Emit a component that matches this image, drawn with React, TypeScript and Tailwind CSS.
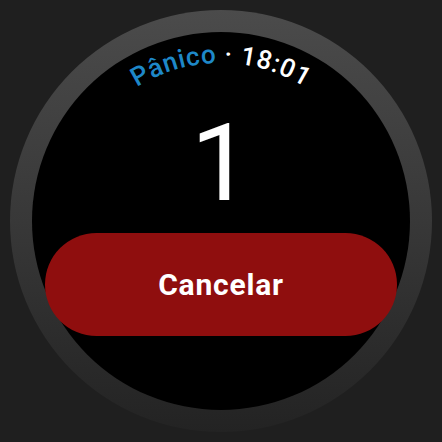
export default function App() {
  return (
    <div
      className="w-[442px] h-[442px] bg-[#1f1f1f] flex items-center justify-center"
      style={{ fontFamily: 'Roboto, "Noto Sans", sans-serif' }}
    >
      {/* ring */}
      <div className="w-[422px] h-[422px] rounded-full bg-gradient-to-b from-[#4b4b4b] via-[#383838] to-[#232323] p-[22px]">
        <div className="relative w-full h-full rounded-full bg-black flex flex-col items-center">
          <svg className="absolute inset-0" width="378" height="378" viewBox="0 0 378 378">
            <defs>
              <path id="topArc" d="M 31 189 A 158 158 0 0 1 347 189" fill="none" />
            </defs>
            <text fontSize="26" fontWeight="500" letterSpacing="0.8" fontFamily="Roboto, sans-serif">
              <textPath href="#topArc" startOffset="50%" textAnchor="middle">
                <tspan fill="#1e88c8">Pânico</tspan>
                <tspan fill="#ffffff"> · 18:01</tspan>
              </textPath>
            </text>
          </svg>

          <div className="pt-[77px] h-[185px] text-white text-[108px] leading-none">1</div>

          <button className="mt-[16px] w-[352px] h-[103px] shrink-0 rounded-full bg-[#8f0e0e] text-white text-[30px] font-bold tracking-[0.8px]">
            Cancelar
          </button>
        </div>
      </div>
    </div>
  );
}
